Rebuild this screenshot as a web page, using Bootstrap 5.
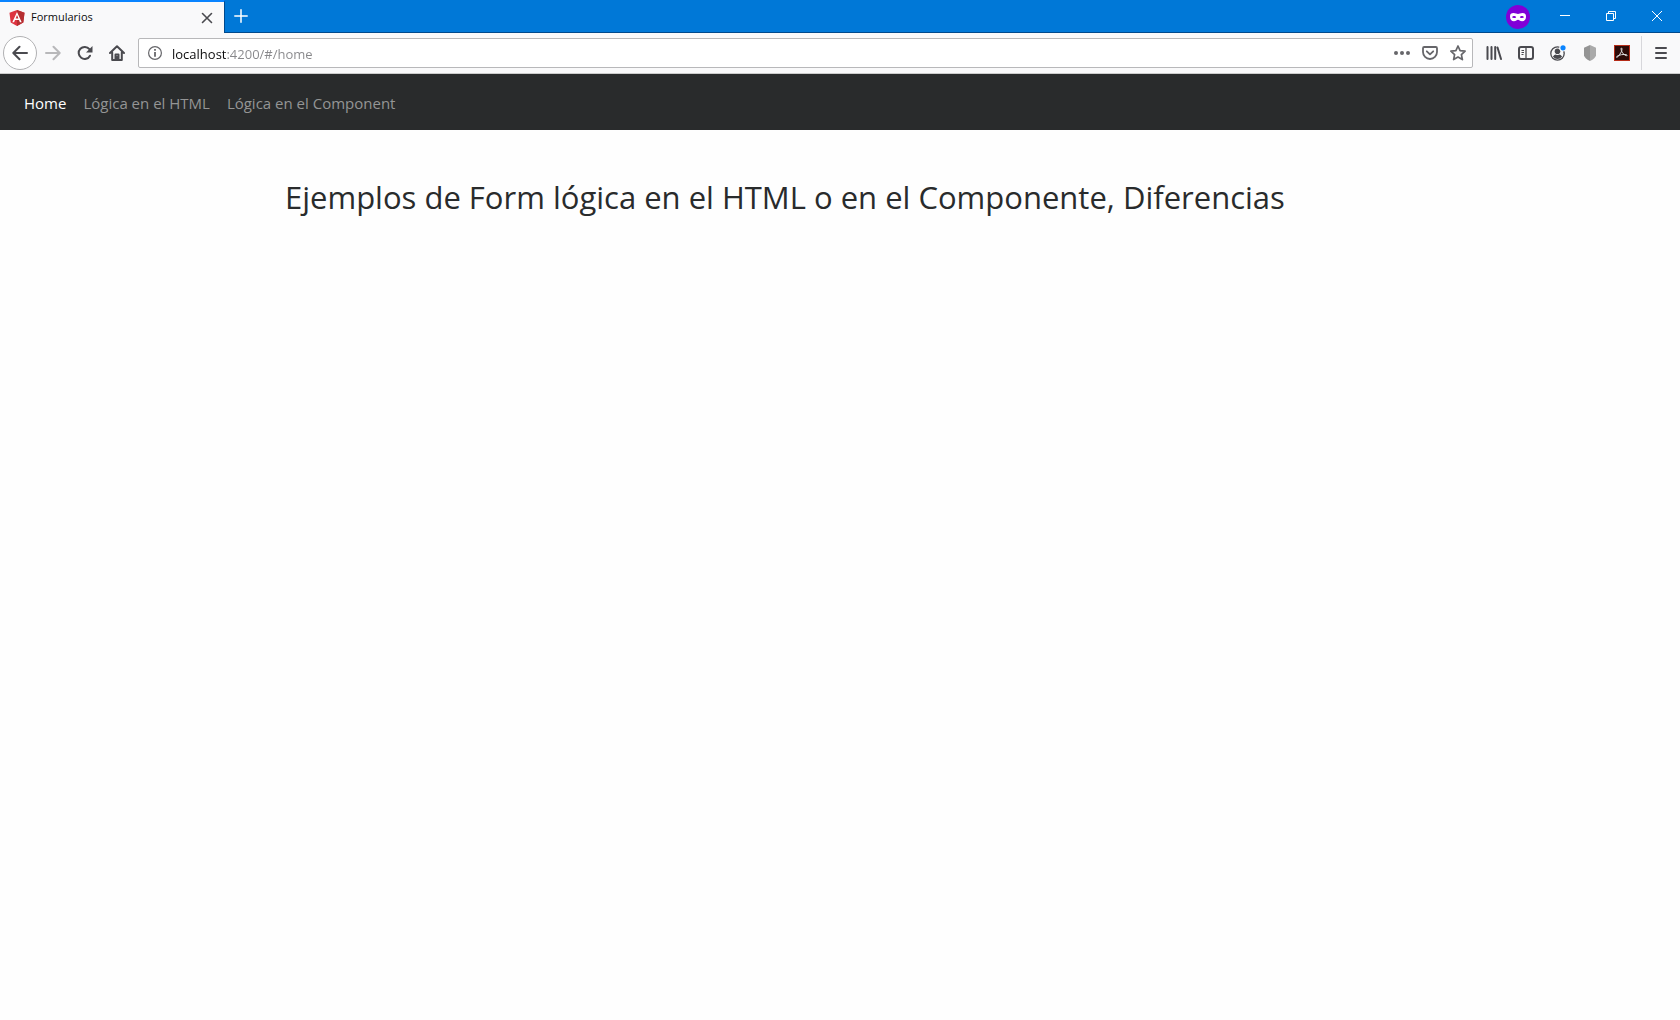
<!DOCTYPE html>
<html lang="es" class="h-100">
<head>
<meta charset="utf-8">
<meta name="viewport" content="width=device-width, initial-scale=1">
<title>Formularios</title>
<link rel="stylesheet" href="https://cdn.jsdelivr.net/npm/bootstrap@5.3.0/dist/css/bootstrap.min.css">
<style>
  body { font-family: "Open Sans", "Noto Sans", sans-serif; color: #292b2c; background: #fefefe; }
  button { padding: 0; border: 0; background: transparent; color: #4a4a4f; display: inline-flex; align-items: center; justify-content: center; flex: none; }
  svg { display: block; flex: none; }
  .title-strip { height: 33px; background: #0078d7; box-shadow: inset 0 -1px #00498c; }
  .browser-tab { width: 225px; background: #f9f9fa; border-top: 2px solid #0a84ff; border-right: 1px solid #00498c; padding: 0 8px; font-size: 11px; color: #0c0c0d; }
  .tab-icon { margin-right: 5px; }
  .tab-close { width: 18px; height: 18px; }
  .new-tab { width: 32px; color: #fff; padding-bottom: 2px; }
  .window-button { width: 46px; color: #fff; padding-bottom: 2px; }
  .private-mark { width: 48px; }
  .toolbar { height: 41px; background: #f9f9fa; border-bottom: 1px solid #ccc; padding: 0 3px; }
  .tool { width: 32px; height: 32px; }
  .back { width: 34px; height: 34px; border: 1px solid #b1b1b3; border-radius: 50%; background: #fff; }
  .address-box { height: 30px; border: 1px solid #b8b8ba; border-radius: 2px; background: #fff; color: #66666a; margin: 0 5px; }
  .address-box button, .site-info { color: #66666a; width: 28px; height: 28px; }
  .site-info { width: 32px; }
  .address { min-width: 0; border: 0; padding: 2px 0 0 1px; outline: 0; font-size: 13px; line-height: 26px; color: #0c0c0d;
    background: linear-gradient(90deg, #0c0c0d 55px, #87878a 55px) text; -webkit-background-clip: text; -webkit-text-fill-color: transparent; }
  .tool-divider { width: 1px; height: 34px; background: #d7d7db; margin: 0 3px; }
  .site-nav { background: #292b2c; min-height: 56px; padding: 10px 16px 8px; font-size: 15px; line-height: 22px; }
  .site-nav .navbar-nav { gap: 1px; }
  .site-nav .nav-link { color: #949595; padding: 8px; }
  .site-nav .nav-link.active { color: #fff; }
  .page { max-width: 1140px; padding: 47px 15px; }
  .page h1 { font-size: 31px; line-height: 40px; font-weight: 400; }
</style>
</head>
<body class="d-flex flex-column h-100">
<header>
  <div class="title-strip d-flex">
    <div class="browser-tab d-flex align-items-center">
      <svg width="18" height="18" viewBox="0 0 18 18" class="tab-icon"><path fill="#dd3340" d="M9 1l7.500 2.700-1.200 9.800L9 17l-6.300-3.500L1.500 3.700z"/><path fill="#b52e31" d="M9 1l7.500 2.700-1.200 9.800L9 17z"/><path fill="#fff" fill-rule="evenodd" d="M9 3l4.700 10.200h-1.800l-.9-2.300H7l-.9 2.300H4.300zM9 6.100L7.600 9.500h2.800z"/></svg>
      <span class="flex-grow-1">Formularios</span>
      <button type="button" class="tab-close" aria-label="Cerrar pestaña"><svg width="12" height="12" viewBox="0 0 12 12" stroke="currentColor" stroke-width="1.600" stroke-linecap="round"><path d="M1.500 1.500l9 9M10.500 1.500l-9 9"/></svg></button>
    </div>
    <button type="button" class="new-tab" aria-label="Nueva pestaña"><svg width="14" height="14" viewBox="0 0 14 14" stroke="currentColor" stroke-width="1.500" stroke-linecap="round"><path d="M7 .8v12.400M.8 7h12.400"/></svg></button>
    <div class="ms-auto d-flex align-items-stretch">
      <div class="private-mark d-flex align-items-center justify-content-center"><svg width="24" height="24" viewBox="0 0 24 24"><circle cx="12" cy="12" r="12" fill="#8000d7"/><path fill="#fff" fill-rule="evenodd" d="M4 11.500C4 8.900 5.300 8 7.500 8c2 0 3.200.9 4.500.9S14.500 8 16.500 8C18.700 8 20 8.900 20 11.500c0 3-1.600 4.800-3.900 4.800-2.200 0-2.900-1.600-4.100-1.600s-1.900 1.600-4.100 1.600C5.600 16.300 4 14.500 4 11.500zM6 12.300c.7 1 3.200 1.100 4.200-.1-.7-1.600-3.400-1.700-4.200.1zm7.800-.1c1 1.200 3.500 1.100 4.200.1-.8-1.800-3.500-1.700-4.200-.1z"/></svg></div>
      <button type="button" class="window-button" aria-label="Minimizar"><svg width="10" height="10" stroke="currentColor"><path d="M0 4.500h10"/></svg></button>
      <button type="button" class="window-button" aria-label="Restaurar"><svg width="10" height="10" fill="none" stroke="currentColor"><path d="M.5 2.500h7v7h-7zM2.500 2.500v-2h7v7h-2"/></svg></button>
      <button type="button" class="window-button" aria-label="Cerrar"><svg width="10" height="10" stroke="currentColor"><path d="M0 0l10 10M10 0L0 10"/></svg></button>
    </div>
  </div>
  <div class="toolbar d-flex align-items-center">
    <button type="button" class="back" aria-label="Atrás"><svg width="16" height="16" viewBox="0 0 16 16" fill="none" stroke="currentColor" stroke-width="2" stroke-linecap="round" stroke-linejoin="round"><path d="M7.500 1.800L1.300 8l6.200 6.200M1.500 8H15"/></svg></button>
    <button type="button" class="tool" aria-label="Adelante" disabled><svg width="16" height="16" viewBox="0 0 16 16" fill="none" stroke="#b8b8ba" stroke-width="2" stroke-linecap="round" stroke-linejoin="round"><path d="M8.500 1.800L14.700 8l-6.200 6.200M14.500 8H1"/></svg></button>
    <button type="button" class="tool" aria-label="Recargar"><svg width="16" height="16" viewBox="0 0 16 16"><path d="M13 10.700A6 6 0 1 1 12.400 4.200" fill="none" stroke="currentColor" stroke-width="2" stroke-linecap="round"/><path fill="currentColor" d="M15.500 1v6.500H9z"/></svg></button>
    <button type="button" class="tool" aria-label="Inicio"><svg width="16" height="16" viewBox="0 0 16 16" fill="none" stroke="currentColor" stroke-width="2" stroke-linecap="round" stroke-linejoin="round"><path d="M1 8l7-6.700L15 8M3.200 7.500V15h9.600V7.500"/><path d="M6.500 15V9.500h3V15M8 12v2"/></svg></button>
    <div class="address-box d-flex align-items-center flex-grow-1">
      <span class="site-info d-flex align-items-center justify-content-center"><svg width="14" height="14" viewBox="0 0 14 14"><circle cx="7" cy="7" r="6.400" fill="none" stroke="currentColor" stroke-width="1.200"/><path stroke="currentColor" stroke-width="1.800" d="M7 6v4.700M7 3v1.800"/></svg></span>
      <input class="address flex-grow-1" type="text" aria-label="Dirección" value="localhost:4200/#/home" spellcheck="false">
      <button type="button" aria-label="Acciones de página"><svg width="16" height="16" viewBox="0 0 16 16" fill="currentColor"><circle cx="2" cy="8" r="2"/><circle cx="8" cy="8" r="2"/><circle cx="14" cy="8" r="2"/></svg></button>
      <button type="button" aria-label="Guardar en Pocket"><svg width="16" height="16" viewBox="0 0 16 16" fill="none" stroke="currentColor" stroke-width="1.800" stroke-linecap="round" stroke-linejoin="round"><path d="M2.200 2h11.600q1.200 0 1.200 1.200V7A7 7 0 0 1 1 7V3.200Q1 2 2.200 2z"/><path d="M4.800 6.300L8 9.400l3.200-3.100"/></svg></button>
      <button type="button" aria-label="Añadir a marcadores"><svg width="16" height="16" viewBox="0 0 16 16" fill="none" stroke="currentColor" stroke-width="1.700" stroke-linejoin="round"><path d="M8 1l2.100 4.600 5 .6-3.700 3.400 1 5L8 12.100l-4.400 2.500 1-5L.9 6.200l5-.6z"/></svg></button>
    </div>
    <button type="button" class="tool" aria-label="Biblioteca"><svg width="16" height="16" viewBox="0 0 16 16" stroke="currentColor" stroke-width="2" stroke-linecap="round"><path d="M1.500 2v12M5.500 2v12M9.200 2v12M11.500 2.500l3.500 11.500"/></svg></button>
    <button type="button" class="tool" aria-label="Barra lateral"><svg width="16" height="16" viewBox="0 0 16 16" fill="none" stroke="currentColor"><rect x="1" y="2" width="14" height="12" rx="2" stroke-width="2"/><path stroke-width="1.300" d="M8 2v12"/><path stroke-width="1" d="M3.500 5.500h2.500M3.500 7.500h2.500M3.500 9.500h2"/></svg></button>
    <button type="button" class="tool" aria-label="Cuenta"><svg width="16" height="16" viewBox="0 0 16 16"><circle cx="7.500" cy="8.500" r="6.700" fill="none" stroke="currentColor" stroke-width="1.300"/><circle cx="7.500" cy="6.300" r="2.800" fill="currentColor"/><path fill="currentColor" d="M2.900 11.500q1.400-2 3-2 1.600 1 3.200 0 1.600 0 3 2-1.600 2.500-4.600 2.500t-4.600-2.500z"/><circle cx="13" cy="2.800" r="3.800" fill="#f9f9fa"/><circle cx="13" cy="2.800" r="2.600" fill="#0a84ff"/></svg></button>
    <button type="button" class="tool" aria-label="Extensión"><svg width="16" height="16" viewBox="0 0 16 16"><path fill="#aaa" d="M8 0l6 2.700v7.500Q13.500 13.500 8 16z"/><path fill="#949494" d="M8 0L2 2.700v7.500Q2.500 13.500 8 16z"/></svg></button>
    <button type="button" class="tool" aria-label="Adobe Acrobat"><svg width="16" height="16" viewBox="0 0 16 16"><rect x=".5" y=".5" width="15" height="15" fill="#2d0b08" stroke="#b52c18"/><path fill="none" stroke="#ddd" stroke-width="1" d="M7.600 3c1.200 1.500-.4 5-4.300 9.300-.5.500-1.200-.1-.4-.9C5 9.800 9.500 9 12.500 9.700c1.200.3.700 1.300-.3 1C9.500 9.800 7 6.500 7 3.700q.1-.8.600-.7z"/></svg></button>
    <span class="tool-divider"></span>
    <button type="button" class="tool" aria-label="Menú"><svg width="16" height="16" viewBox="0 0 16 16" stroke="currentColor" stroke-width="2" stroke-linecap="round"><path d="M3 3h10M3 8h10M3 13h10"/></svg></button>
  </div>
</header>
<nav class="navbar navbar-expand site-nav" aria-label="Principal">
  <ul class="navbar-nav">
    <li class="nav-item"><a class="nav-link active" aria-current="page" href="#/home">Home</a></li>
    <li class="nav-item"><a class="nav-link" href="#/html">Lógica en el HTML</a></li>
    <li class="nav-item"><a class="nav-link" href="#/component">Lógica en el Component</a></li>
  </ul>
</nav>
<main class="container page"><h1>Ejemplos de Form lógica en el HTML o en el Componente, Diferencias</h1></main>
<script src="https://cdn.jsdelivr.net/npm/bootstrap@5.3.0/dist/js/bootstrap.bundle.min.js"></script>
</body>
</html>
